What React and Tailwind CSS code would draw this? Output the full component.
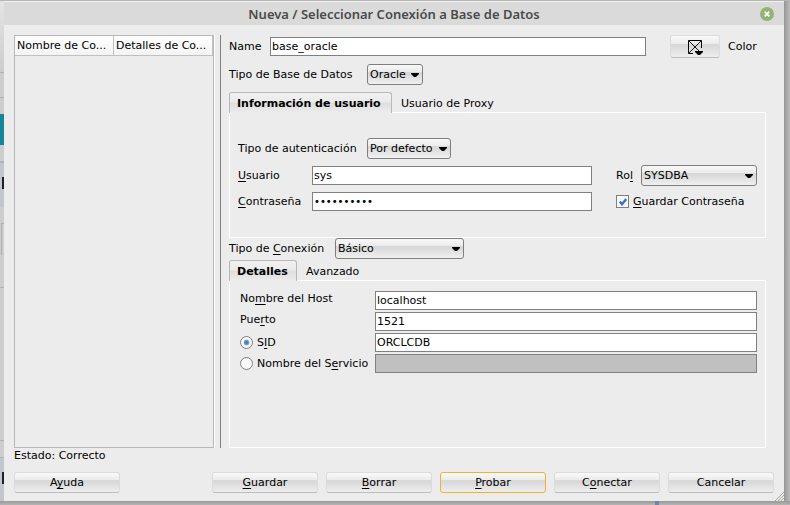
import React from "react";

const FIELD =
  "h-[19px] min-w-0 border border-[#808080] bg-white px-px leading-4 text-black outline-none disabled:bg-[#c0c0c0]";
const BUTTON_FACE =
  "rounded-[3px] border bg-[linear-gradient(to_bottom,#fafafa_0%,#ebebeb_36%,#d8d8d8_37%,#dadada_50%,#eeeeee_100%)]";
const BUTTON_EDGE = "border-[#dcdcdc] border-b-[#bcbcbc]";

function Key({ children }) {
  return (
    <span className="underline decoration-1 underline-offset-2 [text-decoration-skip-ink:none]">
      {children}
    </span>
  );
}

function Select({ id, value, className }) {
  return (
    <div className={`grid items-center ${className}`}>
      <select
        id={id}
        defaultValue={value}
        className="col-start-1 row-start-1 h-[21px] w-full appearance-none rounded-[3px] border border-[#7f7f7f] bg-[linear-gradient(to_bottom,#f8f8f8_0%,#ebebeb_36%,#d6d6d6_37%,#dadada_50%,#f0f0f0_100%)] pl-[2px] text-[11px] leading-4 text-black outline-none"
      >
        <option>{value}</option>
      </select>
      <svg
        viewBox="0 0 8 4"
        className="pointer-events-none col-start-1 row-start-1 mr-1 h-1 w-2 justify-self-end"
      >
        <path d="M0 0h8v1L5 4H3L0 1z" fill="#000" />
      </svg>
    </div>
  );
}

function Tabs({ active, other, activeWidth }) {
  return (
    <div className="flex h-[21px]" role="tablist">
      <button
        role="tab"
        aria-selected="true"
        className={`rounded-t-[3px] border border-b-0 border-[#b8b8b8] bg-[linear-gradient(to_bottom,#f0f0f0_0%,#ebebeb_45%,#dedede_50%,#ececec_100%)] pt-px pl-[7px] text-left font-bold whitespace-nowrap ${activeWidth}`}
      >
        {active}
      </button>
      <div className="flex flex-1 border-b border-white">
        <button role="tab" aria-selected="false" className="px-[9px] pt-[3px]">
          {other}
        </button>
      </div>
    </div>
  );
}

function Action({ children, focused }) {
  return (
    <button
      className={`h-[21px] w-[106px] ${BUTTON_FACE} ${
        focused ? "border-[#f3b02f]" : BUTTON_EDGE
      }`}
    >
      {children}
    </button>
  );
}

function ConnectionList() {
  return (
    <div className="flex w-[200px] shrink-0 border border-[#b8b8b8] shadow-[1px_0_0_#ffffff]">
      <table className="h-5 w-full table-fixed border-separate border-spacing-0">
        <thead>
          <tr className="bg-gradient-to-b from-white to-[#f3f3f3] text-left">
            <th className="h-5 border-r border-b border-[#c0c0c0] p-0 pt-px pl-[2px] font-normal whitespace-nowrap">
              Nombre de Co...
            </th>
            <th className="h-5 border-r border-b border-[#c0c0c0] p-0 pt-px pl-[2px] font-normal whitespace-nowrap">
              Detalles de Co...
            </th>
          </tr>
        </thead>
      </table>
    </div>
  );
}

function UserPanel() {
  return (
    <div className="border border-t-0 border-white px-[8px] py-[25px]">
      <div className="flex items-center">
        <label htmlFor="auth" className="w-[129px]">
          Tipo de autenticación
        </label>
        <Select id="auth" value="Por defecto" className="w-[84px]" />
      </div>
      <div className="mt-[6px] flex h-[21px] items-center">
        <label htmlFor="user" className="w-[74px]">
          <Key>U</Key>suario
        </label>
        <input
          id="user"
          defaultValue="sys"
          className={`flex-1 text-[11px] ${FIELD}`}
        />
        <div className="ml-6 flex w-[141px] items-center justify-between">
          <label htmlFor="role">
            Ro<Key>l</Key>
          </label>
          <Select id="role" value="SYSDBA" className="w-[116px]" />
        </div>
      </div>
      <div className="mt-[5px] flex h-[21px] items-center">
        <label htmlFor="pass" className="w-[74px]">
          <Key>C</Key>ontraseña
        </label>
        <input
          id="pass"
          type="password"
          defaultValue="oracle1234"
          className={`flex-1 text-[10px] ${FIELD}`}
        />
        <label className="ml-6 flex w-[141px] items-center gap-1 whitespace-nowrap">
          <span className="grid size-[13px] shrink-0 place-items-center">
            <input
              type="checkbox"
              defaultChecked
              className="col-start-1 row-start-1 size-[13px] appearance-none border border-[#7f7f7f] bg-[#f8f8f8]"
            />
            <svg
              viewBox="0 0 8 8"
              className="pointer-events-none col-start-1 row-start-1 size-2"
            >
              <path
                d="M.8 3.600 3 6.200 7.200 1"
                fill="none"
                stroke="#3d6fc4"
                strokeWidth="2.400"
              />
            </svg>
          </span>
          <span>
            <Key>G</Key>uardar Contraseña
          </span>
        </label>
      </div>
    </div>
  );
}

function Radio({ id, checked }) {
  return (
    <input
      id={id}
      type="radio"
      name="target"
      defaultChecked={checked}
      className="size-[13px] shrink-0 appearance-none rounded-full border border-[#7f7f7f] bg-[#f8f8f8] checked:bg-[radial-gradient(circle,#3468be_0%,#6f9add_30%,#f8f8f8_42%)]"
    />
  );
}

function DetailsPanel() {
  return (
    <div className="flex-1 border border-t-0 border-white pt-[10px] pr-[8px] pl-[10px]">
      <div className="grid auto-rows-[19px] grid-cols-[135px_1fr] items-center gap-y-[2px]">
        <label htmlFor="host" className="self-start">
          No<Key>m</Key>bre del Host
        </label>
        <input
          id="host"
          defaultValue="localhost"
          className={`text-[11px] ${FIELD}`}
        />
        <label htmlFor="port" className="self-start">
          Pue<Key>r</Key>to
        </label>
        <input
          id="port"
          defaultValue="1521"
          className={`text-[11px] ${FIELD}`}
        />
        <div className="flex items-center gap-1">
          <Radio id="sid" checked />
          <label htmlFor="sid">
            S<Key>I</Key>D
          </label>
        </div>
        <input
          aria-label="SID"
          defaultValue="ORCLCDB"
          className={`text-[11px] ${FIELD}`}
        />
        <div className="flex items-center gap-1 whitespace-nowrap">
          <Radio id="service" />
          <label htmlFor="service">
            Nombre del S<Key>e</Key>rvicio
          </label>
        </div>
        <input
          aria-label="Nombre del Servicio"
          disabled
          className={`text-[11px] ${FIELD}`}
        />
      </div>
    </div>
  );
}

function Dialog() {
  return (
    <main className="flex flex-1 flex-col bg-[#ececec]">
      <header className="grid h-6 grid-cols-[1fr_auto_1fr] items-center border-t border-[#f0f0f0] bg-[#dadada] px-[10px]">
        <h1 className="col-start-2 font-['Noto_Sans',sans-serif] text-[13px] leading-5 font-semibold text-[#4a4a4a]">
          Nueva / Seleccionar Conexión a Base de Datos
        </h1>
        <button
          aria-label="Cerrar"
          className="grid size-[14px] place-items-center justify-self-end rounded-full bg-[#92b372]"
        >
          <svg viewBox="0 0 6 6" className="size-[6px]">
            <path d="M.7.7l4.6 4.6M5.3.7L.7 5.3" stroke="#fff" strokeWidth="1.8" />
          </svg>
        </button>
      </header>

      <div className="flex flex-1 px-[10px] pt-[10px]">
        <ConnectionList />
        <div className="ml-[6px] w-px bg-[#808080]" />
        <section className="ml-2 mr-2 flex min-w-0 flex-1 flex-col">
          <div className="flex h-[23px] items-center">
            <label htmlFor="name" className="w-[41px]">
              Name
            </label>
            <input
              id="name"
              defaultValue="base_oracle"
              className={`flex-1 text-[11px] ${FIELD}`}
            />
            <button
              id="color"
              aria-label="Color"
              className={`ml-6 flex h-[23px] w-[50px] items-center justify-center ${BUTTON_FACE} ${BUTTON_EDGE}`}
            >
              <svg viewBox="0 0 16 16" className="size-4">
                <path d="M14.5 9V1.500H1.500V14.500H6" fill="none" stroke="#000" />
                <path
                  d="M2 2l10 10M14 2L2 14"
                  fill="none"
                  stroke="#000"
                  strokeWidth=".9"
                />
                <path d="M8 12h8v1l-3 3h-2l-3-3z" fill="#000" />
              </svg>
            </button>
            <label htmlFor="color" className="ml-2 w-[38px]">
              Color
            </label>
          </div>

          <div className="mt-[6px] flex items-center">
            <label htmlFor="dbtype" className="w-[138px]">
              Tipo de Base de Datos
            </label>
            <Select id="dbtype" value="Oracle" className="w-[56px]" />
          </div>

          <div className="mt-[7px]">
            <Tabs
              active="Información de usuario"
              other="Usuario de Proxy"
              activeWidth="w-[163px]"
            />
            <UserPanel />
          </div>

          <div className="flex items-center">
            <label htmlFor="conntype" className="w-[106px]">
              Tipo de <Key>C</Key>onexión
            </label>
            <Select id="conntype" value="Básico" className="w-[129px]" />
          </div>

          <div className="mt-px flex flex-1 flex-col">
            <Tabs active="Detalles" other="Avanzado" activeWidth="w-[68px]" />
            <DetailsPanel />
          </div>
        </section>
      </div>

      <p className="px-[10px] leading-4">Estado: Correcto</p>
      <footer className="flex items-end px-[10px] pt-2 pb-2">
        <Action>
          A<Key>y</Key>uda
        </Action>
        <div className="ml-auto flex gap-2">
          <Action>
            <Key>G</Key>uardar
          </Action>
          <Action>
            <Key>B</Key>orrar
          </Action>
          <Action focused>
            <Key>P</Key>robar
          </Action>
          <Action>
            C<Key>o</Key>nectar
          </Action>
          <Action>Cancelar</Action>
        </div>
        <svg viewBox="0 0 10 10" className="-mr-[10px] -mb-2 size-[10px]">
          <path d="M1 10L10 1M4 10l6-6M7 10l3-3" stroke="#a5a58c" fill="none" />
        </svg>
      </footer>
    </main>
  );
}

export default function App() {
  return (
    <div className="flex min-h-screen flex-col bg-[#b8b8b8] font-['DejaVu_Sans',sans-serif] text-[11px] leading-4 text-black">
      <div className="h-px bg-[#b5b5b5]" />
      <div className="flex flex-1">
        <div className="flex w-1 flex-col bg-[#cdcdcd]">
          <div className="h-[72px] border-b border-[#b0b0b0] bg-gradient-to-b from-[#e4e4e4] to-[#cdcdcd]" />
          <div className="h-[25px] border-b border-[#b0b0b0]" />
          <div className="mt-4 h-[31px] bg-[#158799]" />
          <div className="mt-4 h-[2px] bg-[#b4b4b4]" />
          <div className="h-[44px] bg-[#c3c7cd] pt-[14px] pl-[2px]">
            <div className="h-3 bg-[#202020]" />
          </div>
          <div className="mt-4 ml-px h-8 border-t border-l border-[#b0b0b0]" />
          <div className="mt-8 border-t border-[#b0b0b0]" />
          <div className="mt-[152px] border-t border-[#b0b0b0]" />
          <div className="mt-4 flex-1 border-t border-[#b0b0b0] bg-[#c3c7cd] pt-[14px] pl-[2px]">
            <div className="h-3 bg-[#202020]" />
          </div>
        </div>
        <Dialog />
        <div className="w-[6px] bg-gradient-to-r from-[#969696] to-[#bcbcbc]" />
      </div>
      <div className="flex h-1 bg-gradient-to-b from-[#999999] to-[#b5b5b5]">
        <div className="ml-auto mr-[131px] w-1 bg-[#6b87a5]" />
      </div>
    </div>
  );
}
